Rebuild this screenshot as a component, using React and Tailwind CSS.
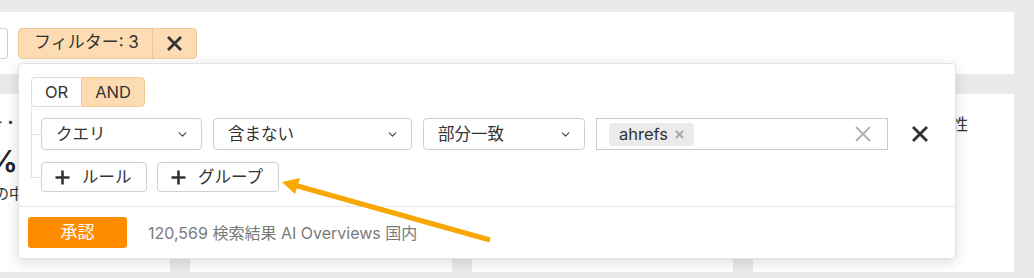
import { ChevronDown } from 'lucide-react'

const FONT = { fontFamily: 'Inter, "Noto Sans CJK JP", sans-serif' }

function Cross({ size, stroke, color }) {
  return (
    <svg width={size} height={size} viewBox={`0 0 ${size} ${size}`} fill="none">
      <path d={`M1 1L${size - 1} ${size - 1}M${size - 1} 1L1 ${size - 1}`} stroke={color} strokeWidth={stroke} />
    </svg>
  )
}

function PlusIcon() {
  return (
    <svg width="15" height="15" viewBox="0 0 15 15" fill="none">
      <path d="M7.5 0.5V14.5M0.5 7.5H14.5" stroke="#333" strokeWidth="2.6" />
    </svg>
  )
}

function Select({ label, width }) {
  return (
    <div
      className={`${width} h-[32px] flex items-center justify-between pl-[14px] pr-[12px] border border-[#cfcfcf] rounded-[4px] bg-white text-[16.5px] text-[#333]`}
    >
      <span>{label}</span>
      <ChevronDown size={13} strokeWidth={2} className="text-[#444]" />
    </div>
  )
}

function AddButton({ label, width }) {
  return (
    <button
      className={`${width} h-[30px] flex items-center pl-[13px] border border-[#cfcfcf] rounded-[4px] bg-white text-[16.5px] text-[#333]`}
    >
      <PlusIcon />
      <span className="ml-[12px]">{label}</span>
    </button>
  )
}

export default function App() {
  return (
    <div className="relative w-[1034px] h-[278px] overflow-hidden bg-[#e9eaec]" style={FONT}>
      {/* top bar */}
      <div className="mt-[12px] w-[1014px] h-[62px] bg-white flex items-center">
        <div className="w-[8px] h-[31px] border border-l-0 border-[#cfcfcf] rounded-r-[4px]" />
        <div className="ml-[10px] h-[31px] flex items-stretch bg-[#fddcb4] border border-[#f3c996] rounded-[4px] text-[17px] text-[#333]">
          <span className="w-[133px] pl-[15px] flex items-center">フィルター: 3</span>
          <span className="w-[44px] border-l border-[#f0c18c] flex items-center justify-center">
            <Cross size={15} stroke={2.8} color="#333" />
          </span>
        </div>
      </div>

      {/* cards behind */}
      <div className="mt-[20px] flex gap-[20px] h-[178px]">
        <div className="w-[170px] bg-white pt-[18px]">
          <div className="w-[18px] overflow-hidden flex justify-end whitespace-nowrap text-[15px] text-[#333]">ー・</div>
          <div className="mt-[8px] w-[18px] overflow-hidden flex justify-end whitespace-nowrap text-[30px] font-semibold text-[#222] leading-[36px]">%</div>
          <div className="mt-[4px] w-[24px] overflow-hidden flex justify-end whitespace-nowrap text-[15px] text-[#333]">の中</div>
        </div>
        <div className="w-[262px] bg-white" />
        <div className="w-[261px] bg-white" />
        <div className="w-[261px] bg-white pt-[20px] pr-[46px] flex justify-end items-start">
          <span className="flex items-center text-[16px] text-[#333] leading-[20px]">
            <span className="w-px h-[14px] bg-[#3b82f6]" />
            性
          </span>
        </div>
      </div>

      {/* filter popover */}
      <div className="absolute left-[18px] top-[63px] w-[938px] h-[196px] bg-white rounded-[4px] border border-[#e2e2e2] shadow-[0_3px_14px_rgba(0,0,0,0.14)]">
        <div className="pt-[13px] pl-[12px] pb-[14px]">
          <div className="flex h-[30px] text-[16.5px] text-[#333]">
            <span className="w-[50px] flex items-center justify-center border border-r-0 border-[#dcdcdc] rounded-l-[4px]">OR</span>
            <span className="w-[64px] flex items-center justify-center bg-[#fddcb4] border border-[#f3c996] rounded-r-[4px]">AND</span>
          </div>
          <div className="relative pl-[10px] pt-[11px]">
            <div className="absolute left-0 top-0 h-[70px] w-px bg-[#e3e3e3]" />
            <div className="flex items-center h-[32px]">
              <div className="absolute left-0 w-[10px] h-px bg-[#e3e3e3]" />
              <Select label="クエリ" width="w-[161px]" />
              <div className="ml-[11px]">
                <Select label="含まない" width="w-[199px]" />
              </div>
              <div className="ml-[11px]">
                <Select label="部分一致" width="w-[162px]" />
              </div>
              <div className="ml-[11px] w-[292px] h-[32px] border border-[#c9c9c9] flex items-center pl-[12px] pr-[16px]">
                <span className="h-[23px] flex items-center bg-[#ebebeb] rounded-[4px] pl-[10px] pr-[10px] text-[16.5px] text-[#333]">
                  ahrefs
                  <span className="ml-[7px]">
                    <Cross size={9} stroke={2} color="#a8a8a8" />
                  </span>
                </span>
                <span className="flex-1" />
                <Cross size={16} stroke={2} color="#b4b4b4" />
              </div>
              <div className="ml-[24px]">
                <Cross size={16} stroke={2.8} color="#2f2f2f" />
              </div>
            </div>
            <div className="flex items-center mt-[12px] h-[30px] gap-[10px]">
              <div className="absolute left-0 w-[10px] h-px bg-[#e3e3e3]" />
              <AddButton label="ルール" width="w-[106px]" />
              <AddButton label="グループ" width="w-[122px]" />
            </div>
          </div>
        </div>
        <div className="border-t border-[#e8e8e8] h-[52px] flex items-center pl-[9px]">
          <button className="w-[99px] h-[31px] bg-[#ff8b00] rounded-[3px] text-white text-[17px] flex items-center justify-center">
            承認
          </button>
          <span className="ml-[21px] text-[16px] text-[#7a7a7a]">120,569 検索結果 AI Overviews 国内</span>
        </div>
      </div>

      {/* annotation arrow */}
      <svg className="absolute left-0 top-0 pointer-events-none" width="1034" height="278" viewBox="0 0 1034 278">
        <line x1="490" y1="240" x2="294" y2="185" stroke="#f9a703" strokeWidth="5" />
        <polygon points="282,182 300,178 295,194" fill="#f9a703" />
      </svg>
    </div>
  )
}
